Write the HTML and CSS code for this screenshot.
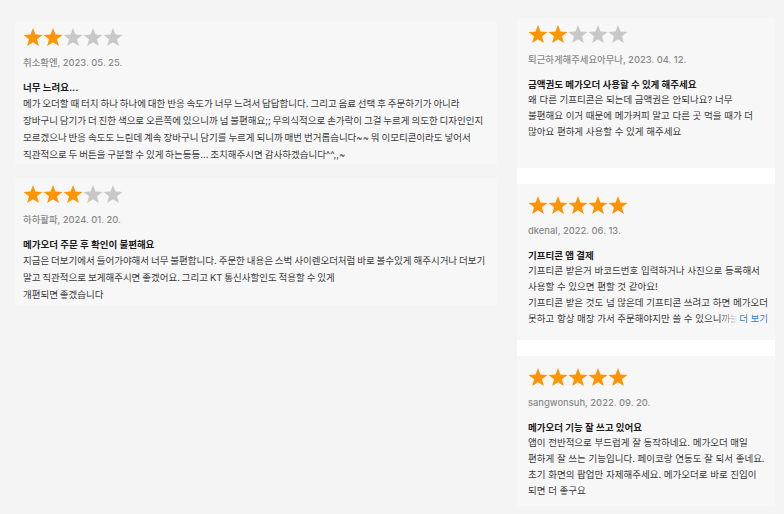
FILE: index.html
```html
<!DOCTYPE html>
<html lang="ko">
<head>
<meta charset="utf-8">
<title>리뷰</title>
<link rel="stylesheet" href="styles.css">
</head>
<body>
<svg class="defs" width="0" height="0" aria-hidden="true">
  <symbol id="star" viewBox="0 0 20 19">
    <polygon points="10,0 12.47,6.6 19.51,6.91 13.99,11.3 15.88,18.09 10,14.2 4.12,18.09 6.01,11.3 0.49,6.91 7.53,6.6"/>
  </symbol>
</svg>
<div class="page">
  <div class="col-left">
    <article class="card card-l card-h1">
      <div class="stars">
        <svg class="on"><use href="#star"/></svg><svg class="on"><use href="#star"/></svg><svg class="off"><use href="#star"/></svg><svg class="off"><use href="#star"/></svg><svg class="off"><use href="#star"/></svg>
      </div>
      <div class="meta">취소확엔, 2023. 05. 25.</div>
      <h3 class="title">너무 느려요...</h3>
      <p class="body">메가 오더할 때 터치 하나 하나에 대한 반응 속도가 너무 느려서 답답합니다. 그리고 음료 선택 후 주문하기가 아니라<br>장바구니 담기가 더 진한 색으로 오른쪽에 있으니까 넘 불편해요;; 무의식적으로 손가락이 그걸 누르게 의도한 디자인인지<br>모르겠으나 반응 속도도 느린데 계속 장바구니 담기를 누르게 되니까 매번 번거롭습니다~~ 뭐 이모티콘이라도 넣어서<br>직관적으로 두 버튼을 구분할 수 있게 하는등등... 조치해주시면 감사하겠습니다^^,,~</p>
    </article>
    <article class="card card-l card-h2">
      <div class="stars">
        <svg class="on"><use href="#star"/></svg><svg class="on"><use href="#star"/></svg><svg class="on"><use href="#star"/></svg><svg class="off"><use href="#star"/></svg><svg class="off"><use href="#star"/></svg>
      </div>
      <div class="meta">하하활파, 2024. 01. 20.</div>
      <h3 class="title">메가오더 주문 후 확인이 불편해요</h3>
      <p class="body">지금은 더보기에서 들어가야해서 너무 불편합니다. 주문한 내용은 스벅 사이렌오더처럼 바로 볼수있게 해주시거나 더보기<br>말고 직관적으로 보게해주시면 좋겠어요. 그리고 KT 통신사할인도 적용할 수 있게<br>개편되면 좋겠습니다</p>
    </article>
  </div>
  <div class="col-right">
    <article class="card card-r card-first">
      <div class="stars">
        <svg class="on"><use href="#star"/></svg><svg class="on"><use href="#star"/></svg><svg class="off"><use href="#star"/></svg><svg class="off"><use href="#star"/></svg><svg class="off"><use href="#star"/></svg>
      </div>
      <div class="meta">퇴근하게해주세요아무나, 2023. 04. 12.</div>
      <h3 class="title">금액권도 메가오더 사용할 수 있게 해주세요</h3>
      <p class="body">왜 다른 기프티콘은 되는데 금액권은 안되나요? 너무<br>불편해요 이거 때문에 메가커피 말고 다른 곳 먹을 때가 더<br>많아요 편하게 사용할 수 있게 해주세요</p>
    </article>
    <article class="card card-r card-tall">
      <div class="stars">
        <svg class="on"><use href="#star"/></svg><svg class="on"><use href="#star"/></svg><svg class="on"><use href="#star"/></svg><svg class="on"><use href="#star"/></svg><svg class="on"><use href="#star"/></svg>
      </div>
      <div class="meta">dkenal, 2022. 06. 13.</div>
      <h3 class="title">기프티콘 앱 결제</h3>
      <p class="body">기프티콘 받은거 바코드번호 입력하거나 사진으로 등록해서<br>사용할 수 있으면 편할 것 같아요!<br>기프티콘 받은 것도 넘 많은데 기프티콘 쓰려고 하면 메가오더<br>못하고 항상 매장 가서 주문해야지만 쓸 수 있으니<span class="fade">까 늘</span><span class="more">더 보기</span></p>
    </article>
    <article class="card card-r">
      <div class="stars">
        <svg class="on"><use href="#star"/></svg><svg class="on"><use href="#star"/></svg><svg class="on"><use href="#star"/></svg><svg class="on"><use href="#star"/></svg><svg class="on"><use href="#star"/></svg>
      </div>
      <div class="meta">sangwonsuh, 2022. 09. 20.</div>
      <h3 class="title">메가오더 기능 잘 쓰고 있어요</h3>
      <p class="body">앱이 전반적으로 부드럽게 잘 동작하네요. 메가오더 매일<br>편하게 잘 쓰는 기능입니다. 페이코랑 연동도 잘 되서 좋네요.<br>초기 화면의 팝업만 자제해주세요. 메가오더로 바로 진입이<br>되면 더 좋구요</p>
    </article>
  </div>
</div>
</body>
</html>
```
FILE: styles.css
```css
* { box-sizing: border-box; }
html, body { margin: 0; padding: 0; }
body {
  background: #f4f4f4;
  font-family: Inter, "Noto Sans CJK KR", sans-serif;
  color: #333;
  width: 784px;
  height: 514px;
  overflow: hidden;
}
.defs { position: absolute; width: 0; height: 0; }
.page {
  display: flex;
  align-items: flex-start;
  padding-left: 15px;
}
.col-left {
  width: 482px;
  margin-top: 21px;
  display: flex;
  flex-direction: column;
  gap: 14px;
}
.col-right {
  width: 258px;
  margin-left: 20px;
  margin-top: 18px;
  background: #ffffff;
  display: flex;
  flex-direction: column;
  gap: 16px;
}
.card {
  background: #f7f7f7;
  overflow: hidden;
}
.card-l { padding: 7px 8px 0; }
.card-h1 { height: 143px; }
.card-h2 { height: 127px; }
.card-r { padding: 12px 11px 0; height: 150px; }
.card-first { padding-top: 7px; }
.card-tall { height: 156px; }
.stars {
  display: flex;
  height: 20px;
}
.stars svg {
  width: 20px;
  height: 19px;
  display: block;
}
.stars .on { fill: #ff9500; }
.stars .off { fill: #c8c8c8; }
.meta {
  margin-top: 6px;
  font-size: 9.4px;
  line-height: 17px;
  color: #8a8a8a;
  font-weight: 500;
  white-space: nowrap;
}
.title {
  margin: 10px 0 0;
  font-size: 9.5px;
  line-height: 14px;
  font-weight: 700;
  color: #1c1c1c;
  white-space: nowrap;
}
.body {
  margin: 0;
  font-size: 9.5px;
  line-height: 17px;
  color: #3a3a3a;
  white-space: nowrap;
}
.card-l .body { word-spacing: -0.8px; }
.card-r .body { line-height: 16px; }
.fade {
  background: linear-gradient(to right, rgba(58,58,58,0.85) 0, rgba(58,58,58,0.05) 100%);
  -webkit-background-clip: text;
  background-clip: text;
  color: transparent;
  letter-spacing: -1.5px;
}
.more {
  margin-left: 2px;
  color: #2f7fd8;
}
```
